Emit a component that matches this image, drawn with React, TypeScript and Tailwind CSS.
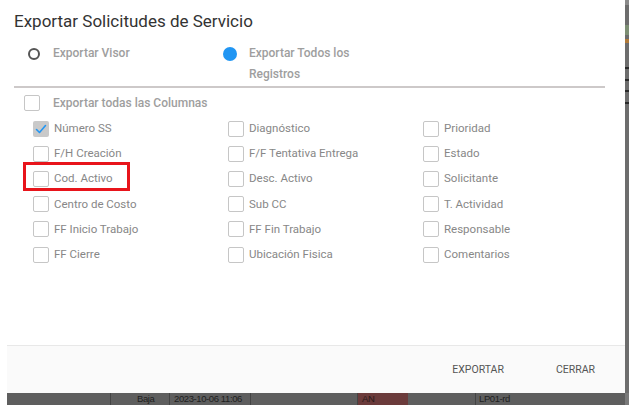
import React from "react"

const columns = [
  ["Número SS", "Diagnóstico", "Prioridad"],
  ["F/H Creación", "F/F Tentativa Entrega", "Estado"],
  ["Cod. Activo", "Desc. Activo", "Solicitante"],
  ["Centro de Costo", "Sub CC", "T. Actividad"],
  ["FF Inicio Trabajo", "FF Fin Trabajo", "Responsable"],
  ["FF Cierre", "Ubicación Fisica", "Comentarios"],
]

function Checkbox({ checked = false }: { checked?: boolean }) {
  if (checked) {
    return (
      <span className="w-[16px] h-[16px] rounded-[2px] bg-[#c9c9c9] flex items-center justify-center shrink-0">
        <svg width="12" height="12" viewBox="0 0 12 12" fill="none">
          <path d="M1.5 6.5 L4.5 9.5 L10.5 2.5" stroke="#2196f3" strokeWidth="1.6" strokeLinecap="round" strokeLinejoin="round" />
        </svg>
      </span>
    )
  }
  return <span className="w-[16px] h-[16px] rounded-[2px] border border-[#c6c6c6] bg-white shrink-0" />
}

export default function App() {
  return (
    <div className="w-[629px] h-[405px] overflow-hidden bg-white flex flex-col font-['Roboto',sans-serif]">
      <div className="flex h-[393px]">
        <div className="w-[7px] bg-white" />
        <div className="w-[618px] flex flex-col relative bg-white">
          <div className="flex-1 px-[7px]">
            <h2 className="pt-[11px] text-[17px] leading-[20px] text-[#333333]">Exportar Solicitudes de Servicio</h2>

            {/* radio row */}
            <div className="mt-[12px] flex items-start h-[42px] text-[12px] leading-[21px] font-medium text-[#9e9e9e]">
              <div className="w-[209px] pl-[14px] flex items-start gap-[13px]">
                <span className="h-[21px] flex items-center">
                  <span className="w-[12px] h-[12px] rounded-full border-2 border-[#555555]" />
                </span>
                <span>Exportar Visor</span>
              </div>
              <div className="flex items-start gap-[12px]">
                <span className="h-[21px] flex items-center">
                  <span className="w-[14px] h-[14px] rounded-full bg-[#2196f3]" />
                </span>
                <span className="w-[115px]">Exportar Todos los Registros</span>
              </div>
            </div>

            <div className="mt-[1px] w-[591px] h-[2px] bg-[#cdc9c9]" />

            <div className="mt-[4px] h-[22px] pl-[10px] flex items-center gap-[13px] text-[12px] font-medium text-[#9e9e9e]">
              <Checkbox />
              <span>Exportar todas las Columnas</span>
            </div>

            <div className="pt-[2px] pl-[19px] flex flex-col">
              {columns.map((row, i) => (
                <div key={i} className="flex h-[25.2px] items-center">
                  {row.map((label, j) => (
                    <div key={j} className="w-[197px] flex items-center gap-[5px] text-[11.5px] text-[#878787]">
                      <Checkbox checked={i === 0 && j === 0} />
                      <span>{label}</span>
                    </div>
                  ))}
                </div>
              ))}
            </div>
          </div>

          {/* highlight */}
          <div className="absolute left-[16px] top-[162px] w-[107px] h-[29px] border-[3px] border-[#e8141b]" />

          <div className="h-[48px] border-t border-[#e8e8e8] bg-[#fafafa] flex items-center justify-end pr-[30px] gap-[52px] text-[10.5px] text-[#555555]">
            <span>EXPORTAR</span>
            <span>CERRAR</span>
          </div>
        </div>
        <div className="w-[4px] bg-[#6d6d6d] flex flex-col">
          <div className="h-[5px] bg-[#8a8a8a]" />
          <div className="mt-[20px] h-[10px] bg-[#7d8f74]" />
          <div className="mt-[4px] h-[4px] bg-[#b07a3a]" />
          <div className="mt-[24px] h-[2px] bg-[#2a2a2a]" />
          <div className="mt-[10px] h-[2px] bg-[#2a2a2a]" />
          <div className="mt-[9px] h-[2px] bg-[#2a2a2a]" />
          <div className="mt-[10px] h-[2px] bg-[#2a2a2a]" />
        </div>
      </div>

      <div className="h-[12px] flex whitespace-nowrap font-['Liberation_Sans',sans-serif] text-[9.5px] leading-[12px] tracking-[-0.4px] text-[#1e1e1e] bg-[#5e5e5e]">
        <div className="w-[7px] bg-white" />
        <div className="w-[104px] border-r border-[#444]" />
        <div className="w-[59px] pl-[26px] border-r border-[#444]">Baja</div>
        <div className="w-[81px] pl-[4px] border-r border-[#444] overflow-hidden">2023-10-06 11:06</div>
        <div className="w-[107px] border-r border-[#444]" />
        <div className="w-[50px] pl-[4px] bg-[#6b3b3b] text-[#2a1a1a]">AN</div>
        <div className="w-[68px] border-r border-[#444]" />
        <div className="w-[149px] pl-[3px]">LP01-rd</div>
        <div className="w-[4px] bg-[#7a7a7a]" />
      </div>
    </div>
  )
}
